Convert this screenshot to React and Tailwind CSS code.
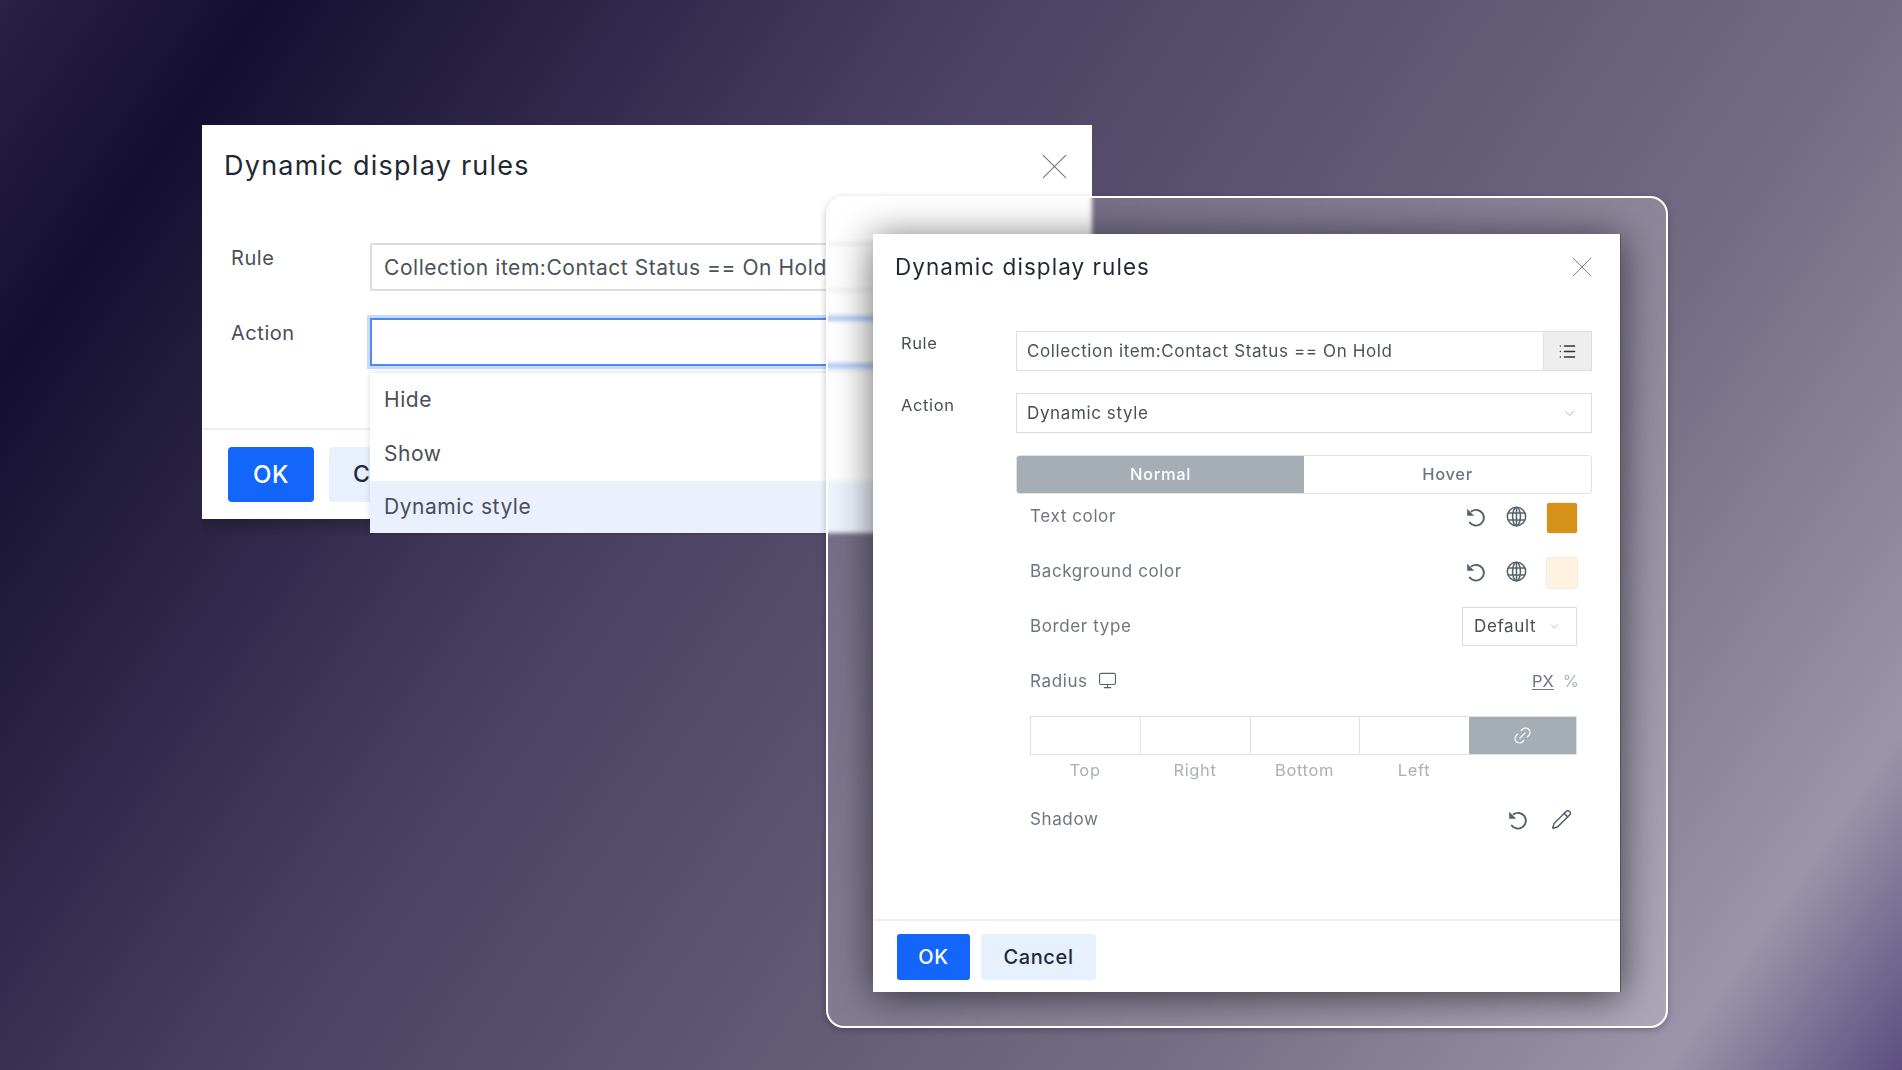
import { ChevronDown, Link2, List, Monitor, Pencil } from 'lucide-react';

const CloseIcon = ({ size }) => (
  <svg width={size} height={size} viewBox="0 0 24 24" fill="none" stroke="currentColor" strokeWidth="1.1" className="text-[#777]">
    <path d="M1 1l22 22M23 1L1 23" />
  </svg>
);

const UndoIcon = () => (
  <svg width="21" height="21" viewBox="0 0 24 24" fill="none" className="text-[#56626c]">
    <path d="M7.5 6A9 9 0 1 1 5.5 19" stroke="currentColor" strokeWidth="2.2" strokeLinecap="round" />
    <path d="M2.5 3v8h8z" fill="currentColor" />
  </svg>
);

const GlobeIcon = () => (
  <svg width="21" height="21" viewBox="0 0 24 24" fill="none" stroke="currentColor" strokeWidth="1.8" className="text-[#56626c]">
    <circle cx="12" cy="12" r="10.5" />
    <ellipse cx="12" cy="12" rx="4.5" ry="10.5" />
    <path d="M12 1.5v21M2.5 8h19M2.5 16h19" />
  </svg>
);

function StyleRow({ children }) {
  return <div className="flex h-[39px] items-center justify-between">{children}</div>;
}

function ColorActions({ color }) {
  return (
    <div className="-mt-px flex items-center gap-[20px]">
      <UndoIcon />
      <GlobeIcon />
      <span className={`mt-[3px] h-[30px] w-[30px] rounded-[2px] shadow-[0_0_2px_rgba(0,0,0,0.25)] ${color}`} />
    </div>
  );
}

function FirstDialog() {
  return (
    <div className="absolute left-[202px] top-[125px] h-[410px] w-[890px] overflow-hidden tracking-[0.55px]">
      <div className="h-[394px] bg-white shadow-[0_4px_16px_rgba(0,0,0,0.3)]">
        <div className="flex h-[82px] items-center justify-between pl-[22px] pr-[25px]">
          <h2 className="text-[27px] tracking-[1.25px] text-[#1f2933]">Dynamic display rules</h2>
          <CloseIcon size={25} />
        </div>
        <div className="mt-[36px] flex pl-[29px]">
          <span className="w-[139px] text-[20px] leading-[30px] text-[#4a4f57]">Rule</span>
          <div className="flex h-[48px] w-[690px] items-center border-2 border-[#dddddd] pl-[12px] pt-px text-[21px] text-[#4a525a]">
            Collection item:Contact Status == On Hold
          </div>
        </div>
        <div className="mt-[27px] flex pl-[29px]">
          <span className="w-[139px] text-[20px] leading-[30px] text-[#4a4f57]">Action</span>
          <div className="h-[48px] w-[690px] border-2 border-[#4d8af0] shadow-[0_0_0_3px_#c9daf8]" />
        </div>
        <div className="mt-[62px] h-[91px] border-t-2 border-[#eeeeee] pl-[26px] pt-[17px]">
          <div className="flex gap-[15px]">
            <button className="h-[55px] w-[86px] rounded-[4px] bg-[#1466fa] text-[24px] font-medium text-white">OK</button>
            <button className="h-[55px] w-[139px] rounded-[4px] bg-[#e7f0fd] pl-[24px] text-left text-[23px] font-medium text-[#1f2a3a]">Cancel</button>
          </div>
        </div>
      </div>
      <div className="absolute left-[168px] top-[248px] w-[690px] bg-white pt-px text-[21px] text-[#4a4f57] shadow-[0_0_6px_rgba(0,0,0,0.15)]">
        <div className="flex h-[52px] items-center pl-[14px]">Hide</div>
        <div className="flex h-[55px] items-center pl-[14px]">Show</div>
        <div className="flex h-[52px] items-center bg-[#eaf0fc] pl-[14px]">Dynamic style</div>
      </div>
    </div>
  );
}

function SecondDialog() {
  return (
    <div className="absolute left-[826px] top-[196px] h-[832px] w-[842px] overflow-hidden rounded-[18px] border-2 border-white bg-white/20 pl-[45px] pt-[36px] tracking-[0.62px] shadow-[0_2px_6px_rgba(0,0,0,0.25)] backdrop-blur-[2px]">
      <div className="flex h-[758px] w-[748px] flex-col border-r border-[#555] bg-white text-[17px] shadow-[0_4px_36px_rgba(0,0,0,0.6)]">
        <div className="flex h-[66px] shrink-0 items-center justify-between pl-[22px] pr-[28px]">
          <h2 className="text-[22.5px] tracking-[1.05px] text-[#1f2933]">Dynamic display rules</h2>
          <CloseIcon size={20} />
        </div>
        <div className="mt-[31px] flex pl-[28px]">
          <span className="w-[115px] text-[16.5px] leading-[24px] text-[#4a4f57]">Rule</span>
          <div className="flex h-[40px] w-[576px] items-center border-[1.5px] border-[#dddddd] pl-[10px] text-[#4a525a]">
            <span className="flex-1 pt-px">Collection item:Contact Status == On Hold</span>
            <span className="flex h-full w-[48px] items-center justify-center border-l-[1.5px] border-[#e2e2e2] bg-[#eeeeee]">
              <List size={19} strokeWidth={1.8} className="text-[#333]" />
            </span>
          </div>
        </div>
        <div className="mt-[22px] flex pl-[28px]">
          <span className="w-[115px] text-[16.5px] leading-[24px] text-[#4a4f57]">Action</span>
          <div className="flex h-[40px] w-[576px] items-center justify-between border-[1.5px] border-[#dddddd] pl-[10px] pr-[14px] text-[#4a4f57]">
            <span className="pt-px">Dynamic style</span>
            <ChevronDown size={15} strokeWidth={1} className="text-[#888]" />
          </div>
        </div>
        <div className="ml-[143px] mt-[22px] w-[576px]">
          <div className="flex h-[39px] overflow-hidden rounded-[3px] border-[1.5px] border-[#e0e3e6] text-[16.5px] font-medium">
            <span className="flex w-[287px] items-center justify-center bg-[#a5aeb5] text-white">Normal</span>
            <span className="flex flex-1 items-center justify-center text-[#6b7680]">Hover</span>
          </div>
          <div className="mt-[3px] flex flex-col gap-[16px] pl-[14px] pr-[15px] text-[#6b7680]">
            <StyleRow>
              Text color
              <ColorActions color="bg-[#d69118]" />
            </StyleRow>
            <StyleRow>
              Background color
              <ColorActions color="bg-[#fff2df]" />
            </StyleRow>
            <StyleRow>
              Border type
              <div className="flex h-[39px] w-[115px] items-center justify-between border-[1.5px] border-[#dddddd] pl-[11px] pr-[15px] text-[#4a4f57]">
                Default
                <ChevronDown size={13} strokeWidth={1} className="text-[#888]" />
              </div>
            </StyleRow>
            <StyleRow>
              <span className="flex items-center gap-[10px]">
                Radius
                <Monitor size={19} strokeWidth={1.4} className="mb-[3px] text-[#56626c]" />
              </span>
              <span className="-mr-[2px] -mt-px flex gap-[9px] text-[16.5px] tracking-normal">
                <span className="underline underline-offset-2">PX</span>
                <span className="text-[#a9b0b6]">%</span>
              </span>
            </StyleRow>
            <div className="-mt-px">
              <div className="flex h-[39px] border-[1.5px] border-[#dfe2e5]">
                <span className="w-[110px] border-r border-[#dfe2e5]" />
                <span className="w-[110px] border-r border-[#dfe2e5]" />
                <span className="w-[109px] border-r border-[#dfe2e5]" />
                <span className="w-[109px]" />
                <span className="flex flex-1 items-center justify-center bg-[#a5aeb5]">
                  <Link2 size={21} strokeWidth={1.5} className="-rotate-45 text-white" />
                </span>
              </div>
              <div className="flex h-[30px] items-center text-[16.5px] text-[#a9b0b6]">
                <span className="w-[110px] text-center">Top</span>
                <span className="w-[110px] text-center">Right</span>
                <span className="w-[109px] text-center">Bottom</span>
                <span className="w-[110px] text-center">Left</span>
              </div>
              <div className="mt-[15px] flex h-[39px] items-center justify-between pr-[5px]">
                Shadow
                <div className="-mt-px flex items-center gap-[23px]">
                  <UndoIcon />
                  <Pencil size={21} strokeWidth={1.7} className="text-[#56626c]" />
                </div>
              </div>
            </div>
          </div>
        </div>
        <div className="mt-auto h-[73px] border-t-2 border-[#eeeeee] pl-[24px] pt-[13px]">
          <div className="flex gap-[11px]">
            <button className="h-[46px] w-[73px] rounded-[3px] bg-[#1466fa] text-[20px] font-medium text-white">OK</button>
            <button className="h-[46px] w-[115px] rounded-[3px] bg-[#e7f0fd] text-[20px] font-medium text-[#1f2a3a]">Cancel</button>
          </div>
        </div>
      </div>
    </div>
  );
}

export default function App() {
  return (
    <div className="relative h-[1070px] w-full overflow-hidden bg-[linear-gradient(125deg,#2a2145_0%,#140f30_10%,#4a4062_37%,#756d85_72%,#9a95aa_91%,#5c4f80_100%)] font-[family-name:Inter,sans-serif]">
      <FirstDialog />
      <SecondDialog />
    </div>
  );
}
